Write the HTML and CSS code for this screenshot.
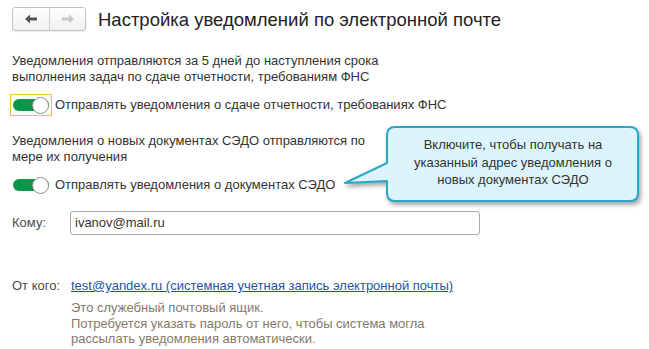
FILE: index.html
```html
<html>
<head>
<title>Настройка уведомлений по электронной почте</title>
<link rel="stylesheet" href="styles.css">
</head>
<body>

<div class="head">
  <div class="nav">
    <button class="nav-btn">
      <svg width="12" height="10" viewBox="0 0 12 10"><path d="M0 5 L5 0.5 V3.5 H12 V6.5 H5 V9.5 Z" fill="#555"/></svg>
    </button>
    <button class="nav-btn">
      <svg width="12" height="10" viewBox="0 0 12 10"><path d="M12 5 L7 0.5 V3.5 H0 V6.5 H7 V9.5 Z" fill="#c8c8c8"/></svg>
    </button>
  </div>
  <h1>Настройка уведомлений по электронной почте</h1>
</div>

<p class="note first">Уведомления отправляются за 5 дней до наступления срока<br>выполнения задач по сдаче отчетности, требованиям ФНС</p>

<div class="check">
  <span class="frame focused"><span class="switch"><span class="knob"></span></span></span>
  <span>Отправлять уведомления о сдаче отчетности, требованиях ФНС</span>
</div>

<p class="note">Уведомления о новых документах СЭДО отправляются по<br>мере их получения</p>

<div class="check">
  <span class="frame"><span class="switch"><span class="knob"></span></span></span>
  <span>Отправлять уведомления о документах СЭДО</span>
</div>

<div class="field to">
  <span class="label">Кому:</span>
  <div class="input">ivanov@mail.ru</div>
</div>

<div class="field from">
  <span class="label">От кого:</span>
  <div>
    <a class="link" href="#">test@yandex.ru (системная учетная запись электронной почты)</a>
    <p class="hint">Это служебный почтовый ящик.<br>Потребуется указать пароль от него, чтобы система могла<br>рассылать уведомления автоматически.</p>
  </div>
</div>

<!-- подсказка -->
<div class="callout">
  <svg width="305" height="92" viewBox="0 0 305 92">
    <path d="M55 7 H290 Q298 7 298 15 V73 Q298 81 290 81 H55 Q47 81 47 73 V61 L5 63 L47 43 V15 Q47 7 55 7 Z"
      fill="#dcf5fc" stroke="#2aa7c8" stroke-width="2" stroke-linejoin="round"/>
  </svg>
  <div class="callout-text">Включите, чтобы получать на<br>указанный адрес уведомления о<br>новых документах СЭДО</div>
</div>

</body>
</html>
```

FILE: styles.css
```css
body {
  margin: 0;
  padding: 7px 12px;
  font-family: "Liberation Sans", Arial, sans-serif;
  font-size: 13px;
  color: #333;
  background: #fff;
}

.head {
  display: flex;
  align-items: center;
  gap: 12px;
  height: 24px;
}

.nav {
  display: flex;
  border: 1px solid #c4c4c4;
  border-radius: 3px;
  background: linear-gradient(#fff, #f1f1f1);
  box-shadow: 0 1px 1px rgba(0,0,0,0.08);
}

.nav-btn {
  width: 36px;
  height: 22px;
  border: none;
  background: none;
  padding: 0;
  display: flex;
  align-items: center;
  justify-content: center;
}

.nav-btn + .nav-btn { border-left: 1px solid #d0d0d0; }

h1 {
  margin: 1px 0 0;
  font-size: 18.5px;
  font-weight: normal;
  color: #222;
}

.note {
  margin: 0;
  line-height: 16px;
}

.note.first { margin-top: 22px; }

.check {
  display: flex;
  align-items: center;
  gap: 3px;
  margin: 9px 0 0 -2px;
  line-height: 16px;
}

.check + .note { margin-top: 17px; }

.frame {
  display: flex;
  align-items: center;
  padding: 2px 2px;
  border: 1px solid transparent;
}

.frame.focused { border-color: #f2c232; }

.switch {
  display: flex;
  align-items: center;
  justify-content: flex-end;
  width: 36px;
  height: 12px;
  margin: 2px 0;
  border-radius: 6px;
  background: #0b9649;
}

.knob {
  width: 17px;
  height: 17px;
  box-sizing: border-box;
  border: 1px solid #8c8c8c;
  border-radius: 50%;
  background: #fff;
}

.field {
  display: grid;
  grid-template-columns: 58px auto;
  align-items: start;
}

.field.to {
  margin-top: 15px;
  align-items: center;
}

.field.from { margin-top: 43px; }

.label { color: #4a4a4a; line-height: 16px; }

.input {
  width: 410px;
  height: 24px;
  box-sizing: border-box;
  border: 1px solid #a8a8a8;
  border-radius: 3px;
  padding: 3px 4px;
  line-height: 16px;
  color: #333;
}

.link {
  display: inline-block;
  padding-left: 1px;
  line-height: 16px;
  color: #2552a6;
}

.hint {
  margin: 6px 0 0 1px;
  line-height: 15.5px;
  color: #86796a;
}

.callout {
  position: absolute;
  left: 340px;
  top: 120px;
  width: 305px;
  height: 92px;
}

.callout svg {
  filter: drop-shadow(2px 3px 2px rgba(0,0,0,0.35));
}

.callout-text {
  position: absolute;
  left: 48px;
  top: 16px;
  width: 250px;
  text-align: center;
  line-height: 17.5px;
  color: #333;
}
```
